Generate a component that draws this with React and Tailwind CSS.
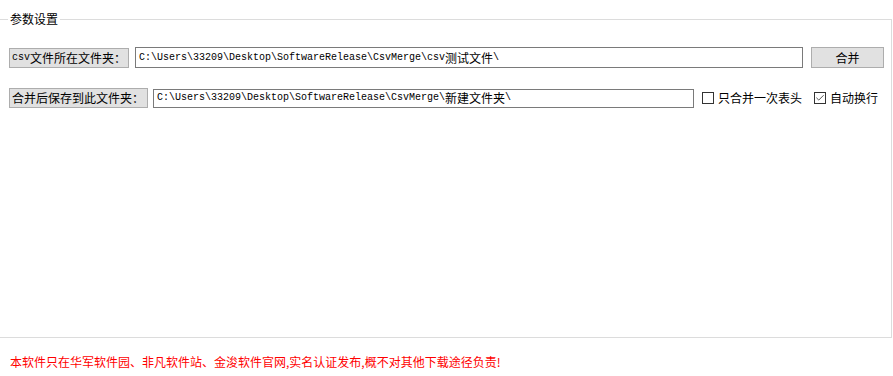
import { Check } from "lucide-react";

const CJK = '"Noto Sans CJK SC", "Noto Sans", sans-serif';
const MONO = '"Liberation Mono", "Noto Sans CJK SC", monospace';

function PathText({ ascii, cjk }) {
  return (
    <span className="flex items-center whitespace-nowrap text-black leading-none">
      <span className="text-[10px] leading-none" style={{ fontFamily: MONO }}>
        {ascii}
      </span>
      <span className="text-[12px] leading-none" style={{ fontFamily: CJK }}>
        {cjk}
      </span>
      <span className="text-[10px] leading-none" style={{ fontFamily: MONO }}>
        \
      </span>
    </span>
  );
}

function Label({ children, width }) {
  return (
    <div
      className={`${width} h-[20px] flex items-center pl-[2px] bg-[#e1e1e1] border border-[#adadad] text-[12px] text-black leading-none whitespace-nowrap`}
    >
      {children}
    </div>
  );
}

function CheckBox({ checked, label }) {
  return (
    <label className="flex items-center gap-[4px] text-[12px] text-black whitespace-nowrap">
      <span className="w-[12px] h-[12px] border border-[#333333] bg-white flex items-center justify-center">
        {checked && <Check size={10} strokeWidth={2} className="text-[#333333]" />}
      </span>
      <span>{label}</span>
    </label>
  );
}

export default function App() {
  return (
    <div
      className="w-[893px] h-[376px] bg-white overflow-hidden flex flex-col"
      style={{ fontFamily: CJK }}
    >
      {/* group box: 参数设置 */}
      <fieldset className="-ml-px w-[893px] h-[327px] mt-[11px] border border-[#dcdcdc]">
        <legend className="ml-[8px] px-[2px] text-[12px] leading-[16px] text-black">
          参数设置
        </legend>

        <div className="flex flex-col pt-[20px] pl-[9px] gap-[20px]">
          <div className="flex items-center">
            <Label width="w-[120px]">
              <span className="text-[10px] leading-none" style={{ fontFamily: MONO }}>csv</span>
              <span className="leading-none">文件所在文件夹：</span>
            </Label>
            <div className="ml-[6px] w-[668px] h-[21px] flex items-center pl-[3px] border border-[#7a7a7a] bg-white">
              <PathText
                ascii="C:\Users\33209\Desktop\SoftwareRelease\CsvMerge\csv"
                cjk="测试文件"
              />
            </div>
            <button className="ml-[8px] w-[73px] h-[21px] bg-[#e1e1e1] border border-[#adadad] text-[12px] text-black leading-none">
              合并
            </button>
          </div>

          <div className="flex items-center">
            <Label width="w-[139px]">合并后保存到此文件夹：</Label>
            <div className="ml-[5px] w-[541px] h-[19px] flex items-center pl-[3px] border border-[#7a7a7a] bg-white">
              <PathText
                ascii="C:\Users\33209\Desktop\SoftwareRelease\CsvMerge\"
                cjk="新建文件夹"
              />
            </div>
            <div className="ml-[8px]">
              <CheckBox label="只合并一次表头" />
            </div>
            <div className="ml-[12px]">
              <CheckBox checked label="自动换行" />
            </div>
          </div>
        </div>
      </fieldset>

      <div className="flex-1 flex items-center pl-[10px] pt-[10px]">
        <p className="text-[12px] text-[#ff0000] whitespace-nowrap">
          本软件只在华军软件园、非凡软件站、金浚软件官网,实名认证发布,概不对其他下载途径负责!
        </p>
      </div>
    </div>
  );
}
